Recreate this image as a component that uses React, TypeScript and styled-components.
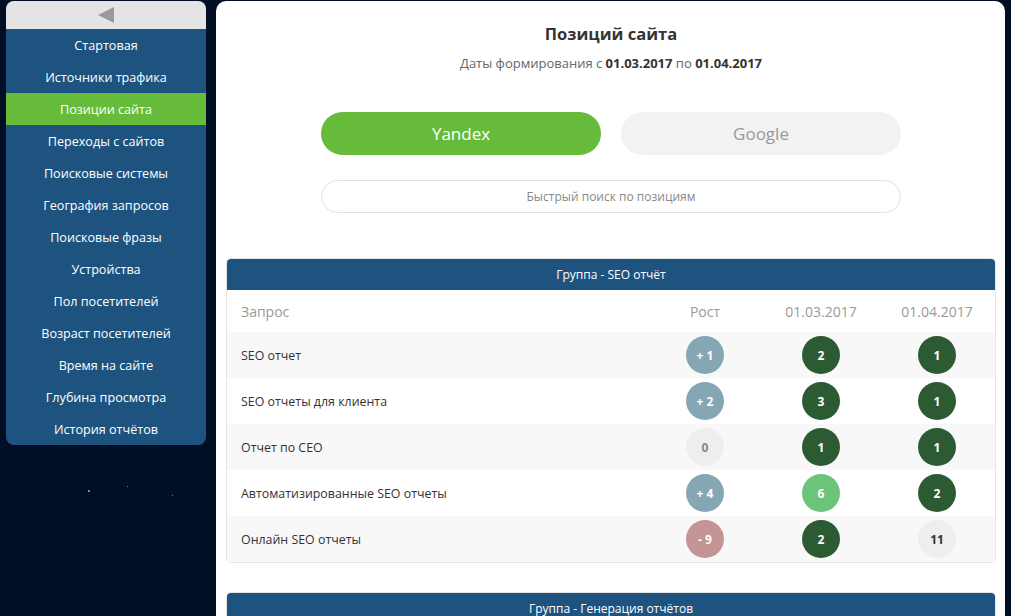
import React from "react";
import styled, { createGlobalStyle } from "styled-components";

const Global = createGlobalStyle`
  html, body { margin: 0; padding: 0; background: #010e24; }
  body { font-family: "Open Sans", "Noto Sans", sans-serif; overflow: hidden; }
  * { box-sizing: border-box; }
`;

const Page = styled.div`
  display: flex;
  gap: 10px;
  padding: 1px 6px 0 6px;
  height: 616px;
  overflow: hidden;
`;

const SideColumn = styled.div`
  width: 200px;
  flex: none;
  display: flex;
  flex-direction: column;
`;

const Sidebar = styled.nav`
  background: #1e5380;
  border-radius: 8px;
  overflow: hidden;
  flex-shrink: 0;
`;

const Collapse = styled.div`
  height: 28px;
  background: #e4e4e4;
  display: flex;
  align-items: center;
  justify-content: center;
`;

const NavItem = styled.div<{ $active?: boolean }>`
  height: 32px;
  display: flex;
  align-items: center;
  justify-content: center;
  color: #ffffff;
  font-size: 12.6px;
  background: ${(p) => (p.$active ? "#66bb3a" : "transparent")};
`;

const Stars = styled.svg`
  margin-top: 40px;
  flex-shrink: 0;
`;

const Main = styled.main`
  flex: 1;
  background: #ffffff;
  border-radius: 10px 10px 0 0;
  padding: 22px 9px 0 10px;
  display: flex;
  flex-direction: column;
  align-items: center;
  & > * { flex-shrink: 0; }
`;

const Title = styled.h1`
  margin: 0;
  font-size: 16.5px;
  line-height: 22px;
  font-weight: 700;
  color: #333;
`;

const Subtitle = styled.div`
  margin-top: 9px;
  font-size: 13px;
  line-height: 18px;
  color: #666;
  b { color: #333; font-weight: 700; }
`;

const Switcher = styled.div`
  margin-top: 40px;
  display: grid;
  grid-template-columns: 280px 280px;
  gap: 20px;
`;

const EngineButton = styled.button<{ $active?: boolean }>`
  height: 43px;
  border: none;
  border-radius: 22px;
  font-family: inherit;
  font-size: 17px;
  background: ${(p) => (p.$active ? "#66bb3a" : "#f2f2f2")};
  color: ${(p) => (p.$active ? "#ffffff" : "#999")};
  font-weight: 400;
`;

const Search = styled.input`
  margin-top: 25px;
  width: 580px;
  height: 33px;
  border: 1px solid #e2e2e2;
  border-radius: 17px;
  text-align: center;
  font-family: inherit;
  font-size: 12px;
  color: #333;
  outline: none;
  &::placeholder { color: #888; }
`;

const Card = styled.section`
  align-self: stretch;
  margin-top: 45px;
  border: 1px solid #e6e6e6;
  border-radius: 5px;
  overflow: hidden;
  & + & { margin-top: 29px; }
`;

const CardHeader = styled.div`
  height: 31px;
  background: #1e5380;
  color: #fff;
  font-size: 12px;
  display: flex;
  align-items: center;
  justify-content: center;
`;

const Row = styled.div<{ $shade?: boolean; $head?: boolean }>`
  display: grid;
  grid-template-columns: 1fr 116px 116px 116px;
  align-items: center;
  height: ${(p) => (p.$head ? "42px" : "46px")};
  padding-left: 14px;
  background: ${(p) => (p.$shade ? "#f8f8f8" : "#fff")};
  font-size: ${(p) => (p.$head ? "14px" : "12.4px")};
  color: ${(p) => (p.$head ? "#999" : "#333")};
`;

const Cell = styled.div`
  display: flex;
  justify-content: center;
`;

const tones: Record<string, { bg: string; fg: string }> = {
  up: { bg: "#85a7b4", fg: "#fff" },
  down: { bg: "#c49595", fg: "#fff" },
  zero: { bg: "#eeeeee", fg: "#888" },
  top: { bg: "#2c5a32", fg: "#fff" },
  mid: { bg: "#6bc47a", fg: "#fff" },
  low: { bg: "#eeeeee", fg: "#333" },
};

const Badge = styled.span<{ $tone: string }>`
  width: 38px;
  height: 38px;
  border-radius: 50%;
  display: flex;
  align-items: center;
  justify-content: center;
  font-size: 12px;
  font-weight: 700;
  background: ${(p) => tones[p.$tone].bg};
  color: ${(p) => tones[p.$tone].fg};
`;

const nav = [
  "Стартовая",
  "Источники трафика",
  "Позиции сайта",
  "Переходы с сайтов",
  "Поисковые системы",
  "География запросов",
  "Поисковые фразы",
  "Устройства",
  "Пол посетителей",
  "Возраст посетителей",
  "Время на сайте",
  "Глубина просмотра",
  "История отчётов",
];

const rows: { q: string; g: [string, string]; a: [string, string]; b: [string, string] }[] = [
  { q: "SEO отчет", g: ["+ 1", "up"], a: ["2", "top"], b: ["1", "top"] },
  { q: "SEO отчеты для клиента", g: ["+ 2", "up"], a: ["3", "top"], b: ["1", "top"] },
  { q: "Отчет по CEO", g: ["0", "zero"], a: ["1", "top"], b: ["1", "top"] },
  { q: "Автоматизированные SEO отчеты", g: ["+ 4", "up"], a: ["6", "mid"], b: ["2", "top"] },
  { q: "Онлайн SEO отчеты", g: ["- 9", "down"], a: ["2", "top"], b: ["11", "low"] },
];

export default function App() {
  return (
    <>
      <Global />
      <Page>
        <SideColumn>
          <Sidebar>
            <Collapse>
              <svg width="18" height="18" viewBox="0 0 18 18">
                <polygon points="1,9 17,1 17,17" fill="#9a9a9a" />
              </svg>
            </Collapse>
            {nav.map((n) => (
              <NavItem key={n} $active={n === "Позиции сайта"}>
                {n}
              </NavItem>
            ))}
          </Sidebar>
          <Stars width="200" height="20" viewBox="0 0 200 20">
            <rect x="82" y="5" width="2" height="2" fill="#7a8a9a" />
            <rect x="121" y="1" width="1" height="1" fill="#6a7a8a" />
            <rect x="166" y="10" width="1" height="1" fill="#6a7a8a" />
          </Stars>
        </SideColumn>
        <Main>
          <Title>Позиций сайта</Title>
          <Subtitle>
            Даты формирования с <b>01.03.2017</b> по <b>01.04.2017</b>
          </Subtitle>
          <Switcher>
            <EngineButton $active>Yandex</EngineButton>
            <EngineButton>Google</EngineButton>
          </Switcher>
          <Search placeholder="Быстрый поиск по позициям" />
          <Card>
            <CardHeader>Группа - SEO отчёт</CardHeader>
            <Row $head>
              <div>Запрос</div>
              <Cell>Рост</Cell>
              <Cell>01.03.2017</Cell>
              <Cell>01.04.2017</Cell>
            </Row>
            {rows.map((r, i) => (
              <Row key={r.q} $shade={i % 2 === 0}>
                <div>{r.q}</div>
                <Cell><Badge $tone={r.g[1]}>{r.g[0]}</Badge></Cell>
                <Cell><Badge $tone={r.a[1]}>{r.a[0]}</Badge></Cell>
                <Cell><Badge $tone={r.b[1]}>{r.b[0]}</Badge></Cell>
              </Row>
            ))}
          </Card>
          <Card>
            <CardHeader>Группа - Генерация отчётов</CardHeader>
          </Card>
        </Main>
      </Page>
    </>
  );
}
